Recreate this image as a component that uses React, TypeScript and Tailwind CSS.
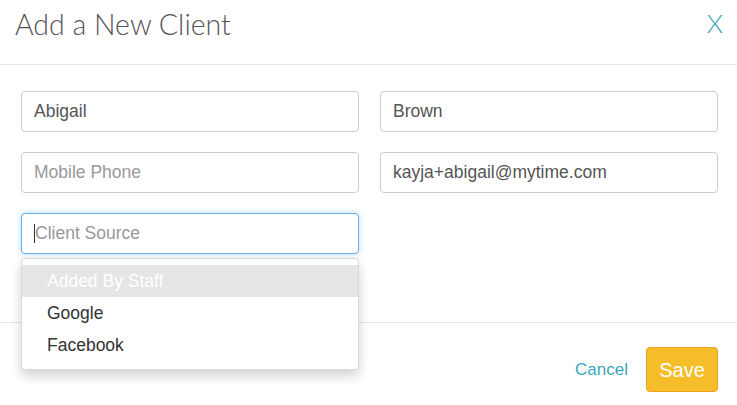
import React, { useState } from 'react';

const SOURCES = ['Added By Staff', 'Google', 'Facebook'];

const Field: React.FC<{ value?: string; placeholder?: string }> = ({ value, placeholder }) => (
  <div className="h-[41px] rounded-[4px] border border-[#cccccc] bg-white px-[12px] flex items-center text-[17.5px]">
    {value ? (
      <span className="text-[#555555]">{value}</span>
    ) : (
      <span className="text-[#999999]">{placeholder}</span>
    )}
  </div>
);

const App: React.FC = () => {
  const [active] = useState(0);

  return (
    <div className="min-h-screen bg-white font-['Liberation_Sans',Arial,sans-serif]">
      {/* header */}
      <header className="h-[65px] border-b border-[#e5e5e5] pl-[15px] pr-[14px] flex justify-between items-start">
        <h1 className="mt-[7px] font-['Lato',sans-serif] font-light text-[28.5px] text-[#555555] leading-[34px]">
          Add a New Client
        </h1>
        <button className="mt-[8px] font-['Lato',sans-serif] font-light text-[26px] leading-[30px] text-[#3aa6bb]">
          X
        </button>
      </header>

      {/* body */}
      <div className="pl-[21px] pr-[19px] pt-[26px] pb-[68px] grid grid-cols-2 gap-x-[21px] gap-y-[20px]">
        <Field value="Abigail" />
        <Field value="Brown" />
        <Field placeholder="Mobile Phone" />
        <Field value="kayja+abigail@mytime.com" />
        <div className="relative">
          <div className="h-[41px] rounded-[4px] border border-[#66afe9] shadow-[0_0_6px_rgba(102,175,233,0.45)] bg-white pl-[12px] flex items-center text-[17.5px]">
            <span className="w-px h-[19px] bg-[#333333]" />
            <span className="text-[#999999]">Client Source</span>
          </div>
          <ul className="absolute left-0 right-0 top-[45px] z-10 rounded-[4px] border border-[rgba(0,0,0,0.15)] bg-white pt-[6px] pb-[8px] shadow-[0_6px_12px_rgba(0,0,0,0.175)] text-[17.5px]">
            {SOURCES.map((s, i) => (
              <li
                key={s}
                className={`h-[32px] pl-[25px] flex items-center ${
                  i === active ? 'bg-[#e5e5e5] text-white' : 'text-[#333333]'
                }`}
              >
                {s}
              </li>
            ))}
          </ul>
        </div>
        <div />
      </div>

      {/* footer */}
      <footer className="border-t border-[#e5e5e5] pt-[24px] pb-[12px] pr-[19px] flex justify-end items-center gap-[18px]">
        <button className="text-[17px] text-[#3aa6bb]">Cancel</button>
        <button className="w-[72px] h-[45px] rounded-[4px] border border-[#f0a020] bg-[#f6bd2b] text-white text-[20px]">
          Save
        </button>
      </footer>
    </div>
  );
};

export default App;
